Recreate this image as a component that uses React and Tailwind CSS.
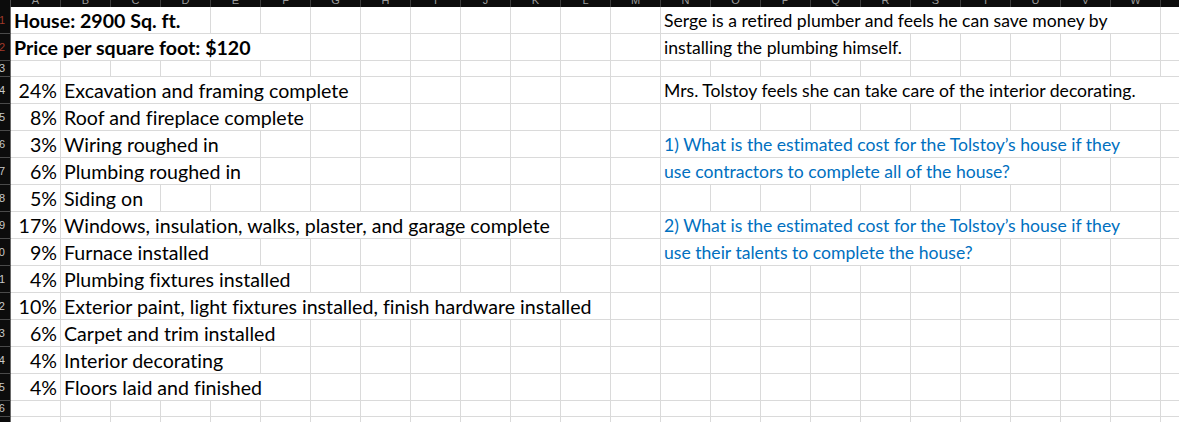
import React from "react";

const COLS = "ABCDEFGHIJKLMNOPQRSTUVWX".split("");

const BLUE = "text-[#0070c0]";
const NOTE = "text-[17.6px]";

const rows = [
  {
    h: "h-[27px]",
    cells: [
      { col: 0, span: 4, text: "House: 2900 Sq. ft.", cls: "font-bold" },
      { col: 13, span: 10, text: "Serge is a retired plumber and feels he can save money by", cls: NOTE },
    ],
  },
  {
    h: "h-[27px]",
    cells: [
      { col: 0, span: 6, text: "Price per square foot: $120", cls: "font-bold" },
      { col: 13, span: 5, text: "installing the plumbing himself.", cls: NOTE },
    ],
  },
  { h: "h-[16px]", cells: [] },
  {
    h: "h-[27px]",
    cells: [
      { col: 0, span: 1, text: "24%", right: true },
      { col: 1, span: 6, text: "Excavation and framing complete" },
      { col: 13, span: 11, text: "Mrs. Tolstoy feels she can take care of the interior decorating.", cls: NOTE },
    ],
  },
  {
    h: "h-[27px]",
    cells: [
      { col: 0, span: 1, text: "8%", right: true },
      { col: 1, span: 5, text: "Roof and fireplace complete" },
    ],
  },
  {
    h: "h-[27px]",
    cells: [
      { col: 0, span: 1, text: "3%", right: true },
      { col: 1, span: 4, text: "Wiring roughed in" },
      { col: 13, span: 10, text: "1) What is the estimated cost for the Tolstoy’s house if they", cls: `${NOTE} ${BLUE}` },
    ],
  },
  {
    h: "h-[27px]",
    cells: [
      { col: 0, span: 1, text: "6%", right: true },
      { col: 1, span: 4, text: "Plumbing roughed in" },
      { col: 13, span: 8, text: "use contractors to complete all of the house?", cls: `${NOTE} ${BLUE}` },
    ],
  },
  {
    h: "h-[27px]",
    cells: [
      { col: 0, span: 1, text: "5%", right: true },
      { col: 1, span: 2, text: "Siding on" },
    ],
  },
  {
    h: "h-[27px]",
    cells: [
      { col: 0, span: 1, text: "17%", right: true },
      { col: 1, span: 10, text: "Windows, insulation, walks, plaster, and garage complete" },
      { col: 13, span: 10, text: "2) What is the estimated cost for the Tolstoy’s house if they", cls: `${NOTE} ${BLUE}` },
    ],
  },
  {
    h: "h-[27px]",
    cells: [
      { col: 0, span: 1, text: "9%", right: true },
      { col: 1, span: 4, text: "Furnace installed" },
      { col: 13, span: 7, text: "use their talents to complete the house?", cls: `${NOTE} ${BLUE}` },
    ],
  },
  {
    h: "h-[27px]",
    cells: [
      { col: 0, span: 1, text: "4%", right: true },
      { col: 1, span: 5, text: "Plumbing fixtures installed" },
    ],
  },
  {
    h: "h-[27px]",
    cells: [
      { col: 0, span: 1, text: "10%", right: true },
      { col: 1, span: 11, text: "Exterior paint, light fixtures installed, finish hardware installed" },
    ],
  },
  {
    h: "h-[27px]",
    cells: [
      { col: 0, span: 1, text: "6%", right: true },
      { col: 1, span: 5, text: "Carpet and trim installed" },
    ],
  },
  {
    h: "h-[27px]",
    cells: [
      { col: 0, span: 1, text: "4%", right: true },
      { col: 1, span: 4, text: "Interior decorating" },
    ],
  },
  {
    h: "h-[27px]",
    cells: [
      { col: 0, span: 1, text: "4%", right: true },
      { col: 1, span: 5, text: "Floors laid and finished" },
    ],
  },
  { h: "h-[16px]", cells: [] },
  { h: "h-[27px]", cells: [] },
];

const widths = {
  1: "w-[50px]",
  2: "w-[100px]",
  3: "w-[150px]",
  4: "w-[200px]",
  5: "w-[250px]",
  6: "w-[300px]",
  7: "w-[350px]",
  8: "w-[400px]",
  9: "w-[450px]",
  10: "w-[500px]",
  11: "w-[550px]",
};

const Row = ({ row, index }) => {
  const out = [];
  let i = 0;
  while (i < COLS.length) {
    const cell = row.cells.find((c) => c.col === i);
    if (cell) {
      out.push(
        <div
          key={i}
          className={`${widths[cell.span]} shrink-0 border-r border-[#dadada] flex items-end pb-[2px] ${
            cell.right ? "justify-end pr-[3px]" : "pl-[3px]"
          }`}
        >
          <span className={`whitespace-nowrap leading-[20px] ${cell.cls || ""}`}>
            {cell.text}
          </span>
        </div>
      );
      i += cell.span;
    } else {
      out.push(<div key={i} className="w-[50px] shrink-0 border-r border-[#dadada]" />);
      i += 1;
    }
  }
  return (
    <div className={`flex ${row.h}`}>
      <div
        className={`w-[11px] shrink-0 bg-[#0c0c0c] border-r border-[#6a6a6a] border-b border-b-[#4a4a4a] overflow-hidden flex items-center justify-end pr-[5px] text-[11px] ${
          index < 2 ? "text-[#a33a2a]" : "text-[#c9c9c9]"
        }`}
        style={{ fontFamily: "'Liberation Sans', sans-serif" }}
      >
        {index + 1}
      </div>
      <div className="flex border-b border-[#dadada]">{out}</div>
    </div>
  );
};

export default function App() {
  return (
    <div
      className="w-[1179px] h-[422px] overflow-hidden bg-white text-black text-[19.6px] [font-variant-ligatures:none]"
      style={{ fontFamily: "Lato, 'Open Sans', sans-serif" }}
    >
      <div className="flex h-[7px] bg-[#0c0c0c] overflow-hidden">
        <div className="w-[11px] shrink-0 border-r border-[#4a4a4a]" />
        {COLS.map((c) => (
          <div
            key={c}
            className="w-[50px] shrink-0 border-r border-[#3c3c3c] flex justify-center overflow-hidden"
          >
            <span
              className="text-[11px] leading-[11px] mt-[-5px] text-[#9a9a9a]"
              style={{ fontFamily: "'Liberation Sans', sans-serif" }}
            >
              {c}
            </span>
          </div>
        ))}
      </div>
      {rows.map((row, index) => (
        <Row key={index} row={row} index={index} />
      ))}
    </div>
  );
}
